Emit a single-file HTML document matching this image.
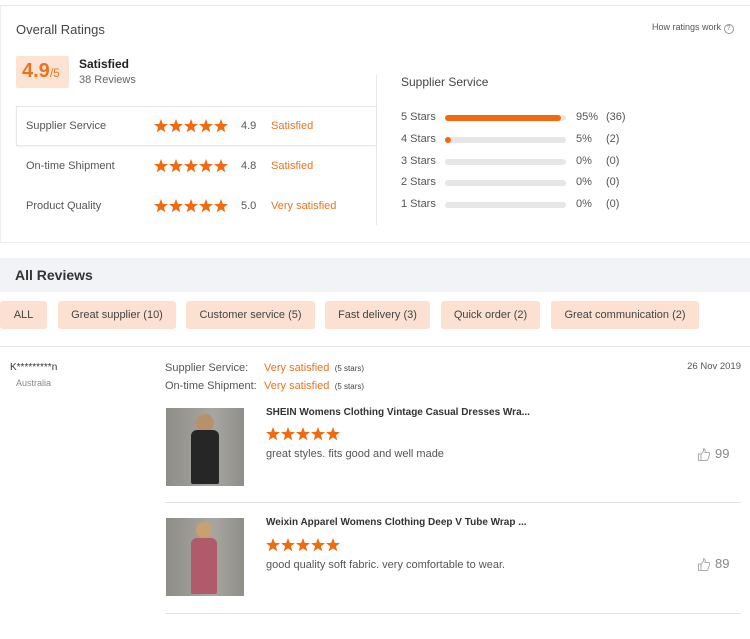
<!DOCTYPE html>
<html><head><meta charset="utf-8"><style>
*{margin:0;padding:0;box-sizing:border-box}
body{width:750px;height:639px;background:#fff;font-family:"Liberation Sans",Arial,sans-serif;color:#333;position:relative;overflow:hidden}
.a{position:absolute;white-space:nowrap}
.sm{font-size:11px;color:#555}
.or{color:#e8741f}
.bar{position:absolute;left:445px;width:121px;height:6px;border-radius:3px;background:#e6e6e6}
.tag{position:absolute;top:301px;height:28px;background:#fce0d1;border-radius:3px;font-size:11px;color:#444;text-align:center;line-height:28px}
</style></head><body>
<svg width="0" height="0" style="position:absolute"><defs>
<polygon id="s" points="7,0 8.8,4.9 14,5.1 9.9,8.3 11.3,13.3 7,10.4 2.7,13.3 4.1,8.3 0,5.1 5.2,4.9" fill="#f26a0f"/>
<g id="s5"><use href="#s" x="0"/><use href="#s" x="15"/><use href="#s" x="30"/><use href="#s" x="45"/><use href="#s" x="60"/></g>
<g id="th"><path d="M1.5 6 H4 V12.5 H1.5 Z M4 6.5 L6.5 3 V0.8 C7.8 0.8 8.5 2 8 4.5 H11.5 C12.5 4.5 12.8 5.5 12.5 6.3 L11 11.5 C10.7 12.3 10.2 12.5 9.5 12.5 H4" fill="none" stroke="#aaa" stroke-width="1"/></g>
</defs></svg>
<div class="a" style="left:0;top:5px;width:750px;height:238px;border-top:1px solid #e8e8e8;border-left:1px solid #eee;border-bottom:1px solid #eee"></div>
<div class="a" style="left:16px;top:22px;font-size:13px;color:#444">Overall Ratings</div>
<div class="a" style="left:652px;top:22px;font-size:9px;color:#555">How ratings work <span style="display:inline-block;width:10px;height:10px;border:1px solid #999;border-radius:50%;font-size:7px;text-align:center;line-height:8px;color:#888">?</span></div>
<div class="a" style="left:16px;top:56px;width:53px;height:32px;background:#fde3d3;border-radius:2px"></div>
<div class="a" style="left:22px;top:60px;font-size:20px;font-weight:bold;color:#e8741f">4.9<span style="font-size:12px;font-weight:normal">/5</span></div>
<div class="a" style="left:79px;top:57px;font-size:12px;font-weight:bold;color:#222">Satisfied</div>
<div class="a" style="left:79px;top:74px;font-size:11px;color:#666">38 Reviews</div>
<div class="a" style="left:376px;top:75px;width:1px;height:150px;background:#e8e8e8"></div>
<div class="a" style="left:16px;top:106px;width:360px;height:40px;border:1px solid #e6e6e6;border-right:none;box-shadow:0 1px 2px rgba(0,0,0,.05)"></div>
<div class="a sm" style="left:26px;top:120px">Supplier Service</div>
<svg class="a" style="left:154px;top:119px" width="75" height="14"><use href="#s5"/></svg>
<div class="a sm" style="left:241px;top:120px">4.9</div>
<div class="a sm or" style="left:271px;top:120px">Satisfied</div>
<div class="a sm" style="left:26px;top:160px">On-time Shipment</div>
<svg class="a" style="left:154px;top:159px" width="75" height="14"><use href="#s5"/></svg>
<div class="a sm" style="left:241px;top:160px">4.8</div>
<div class="a sm or" style="left:271px;top:160px">Satisfied</div>
<div class="a sm" style="left:26px;top:200px">Product Quality</div>
<svg class="a" style="left:154px;top:199px" width="75" height="14"><use href="#s5"/></svg>
<div class="a sm" style="left:241px;top:200px">5.0</div>
<div class="a sm or" style="left:271px;top:200px">Very satisfied</div>
<div class="a" style="left:401px;top:75px;font-size:12px;color:#444">Supplier Service</div>
<div class="a sm" style="left:401px;top:111px">5 Stars</div><div class="bar" style="top:115px"><div style="width:116px;height:6px;border-radius:3px;background:#f26a0f"></div></div><div class="a sm" style="left:576px;top:111px">95%</div><div class="a sm" style="left:606px;top:111px">(36)</div>
<div class="a sm" style="left:401px;top:133px">4 Stars</div><div class="bar" style="top:137px"><div style="width:6px;height:6px;border-radius:3px;background:#f26a0f"></div></div><div class="a sm" style="left:576px;top:133px">5%</div><div class="a sm" style="left:606px;top:133px">(2)</div>
<div class="a sm" style="left:401px;top:155px">3 Stars</div><div class="bar" style="top:159px"></div><div class="a sm" style="left:576px;top:155px">0%</div><div class="a sm" style="left:606px;top:155px">(0)</div>
<div class="a sm" style="left:401px;top:176px">2 Stars</div><div class="bar" style="top:180px"></div><div class="a sm" style="left:576px;top:176px">0%</div><div class="a sm" style="left:606px;top:176px">(0)</div>
<div class="a sm" style="left:401px;top:198px">1 Stars</div><div class="bar" style="top:202px"></div><div class="a sm" style="left:576px;top:198px">0%</div><div class="a sm" style="left:606px;top:198px">(0)</div>

<div class="a" style="left:0;top:258px;width:750px;height:34px;background:#f2f3f7"></div>
<div class="a" style="left:15px;top:267px;font-size:14px;font-weight:bold;color:#333">All Reviews</div>
<div class="tag" style="left:0;width:47px">ALL</div>
<div class="tag" style="left:58px;width:118px">Great supplier (10)</div>
<div class="tag" style="left:186px;width:129px">Customer service (5)</div>
<div class="tag" style="left:325px;width:105px">Fast delivery (3)</div>
<div class="tag" style="left:441px;width:99px">Quick order (2)</div>
<div class="tag" style="left:551px;width:148px">Great communication (2)</div>
<div class="a" style="left:0;top:346px;width:750px;height:1px;background:#e6e6e6"></div>

<div class="a" style="left:10px;top:362px;font-size:10px;color:#333">K*********n</div>
<div class="a" style="left:16px;top:378px;font-size:9px;color:#888">Australia</div>
<div class="a sm" style="left:165px;top:362px">Supplier Service:</div>
<div class="a sm or" style="left:264px;top:362px">Very satisfied <span style="font-size:8px;color:#444">&nbsp;(5 stars)</span></div>
<div class="a sm" style="left:165px;top:380px">On-time Shipment:</div>
<div class="a sm or" style="left:264px;top:380px">Very satisfied <span style="font-size:8px;color:#444">&nbsp;(5 stars)</span></div>
<div class="a" style="right:9px;top:361px;font-size:9.5px;color:#555">26 Nov 2019</div>

<div class="a" style="left:166px;top:408px;width:78px;height:78px;background:linear-gradient(90deg,#8e8d88,#a7a6a1 60%,#8f8e89)"></div>
<div class="a" style="left:196px;top:414px;width:18px;height:18px;border-radius:50%;background:#b8916a"></div>
<div class="a" style="left:191px;top:430px;width:28px;height:54px;background:#262626;border-radius:6px 6px 2px 2px"></div>
<div class="a" style="left:266px;top:407px;font-size:10px;font-weight:bold;color:#333">SHEIN Womens Clothing Vintage Casual Dresses Wra...</div>
<svg class="a" style="left:266px;top:427px" width="75" height="14"><use href="#s5"/></svg>
<div class="a sm" style="left:266px;top:448px">great styles. fits good and well made</div>
<svg class="a" style="left:697px;top:448px" width="14" height="14"><use href="#th"/></svg>
<div class="a" style="left:715px;top:446px;font-size:13px;color:#888">99</div>
<div class="a" style="left:165px;top:502px;width:576px;height:1px;background:#e3e3e3"></div>

<div class="a" style="left:166px;top:518px;width:78px;height:78px;background:linear-gradient(90deg,#8e8d88,#a7a6a1 60%,#8f8e89)"></div>
<div class="a" style="left:196px;top:522px;width:16px;height:16px;border-radius:50%;background:#c9a070"></div>
<div class="a" style="left:191px;top:538px;width:26px;height:56px;background:#b05a6c;border-radius:6px 6px 2px 2px"></div>
<div class="a" style="left:266px;top:517px;font-size:10px;font-weight:bold;color:#333">Weixin Apparel Womens Clothing Deep V Tube Wrap ...</div>
<svg class="a" style="left:266px;top:538px" width="75" height="14"><use href="#s5"/></svg>
<div class="a sm" style="left:266px;top:559px">good quality soft fabric. very comfortable to wear.</div>
<svg class="a" style="left:697px;top:558px" width="14" height="14"><use href="#th"/></svg>
<div class="a" style="left:715px;top:556px;font-size:13px;color:#888">89</div>
<div class="a" style="left:165px;top:613px;width:576px;height:1px;background:#e3e3e3"></div>
</body></html>
